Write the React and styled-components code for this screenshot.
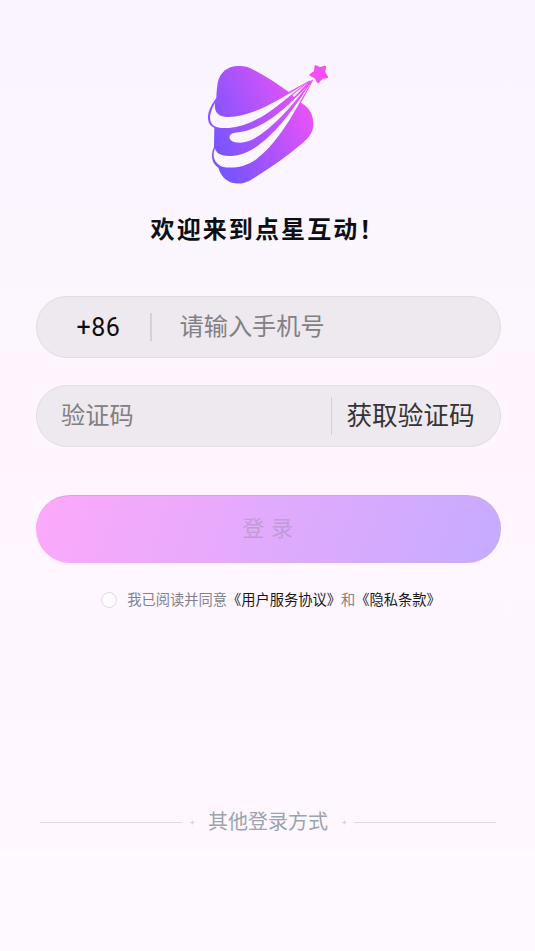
import styled, { createGlobalStyle } from "styled-components";

const App = () => {
  return (
    <>
      <GlobalStyle />
      <Page>
        <Logo />
        <Title>欢迎来到点星互动！</Title>
        <Form>
          <Field>
            <AreaCode>+86</AreaCode>
            <Separator $height={28} $width={2} />
            <Input $offset={28} type="tel" placeholder="请输入手机号" />
          </Field>
          <Field>
            <Input $offset={24.5} placeholder="验证码" />
            <Separator $height={38} $width={1} />
            <CodeButton type="button">获取验证码</CodeButton>
          </Field>
          <LoginButton type="button">登 录</LoginButton>
        </Form>
        <Agreement>
          <Radio />
          <p>
            我已阅读并同意<a>《用户服务协议》</a>和<a>《隐私条款》</a>
          </p>
        </Agreement>
        <OtherLogin>
          <Line />
          <Spark />
          <span>其他登录方式</span>
          <Spark />
          <Line />
        </OtherLogin>
      </Page>
    </>
  );
};

const Logo = () => (
  <LogoSvg viewBox="0 0 435 420">
    <defs>
      <linearGradient
        id="logo-fill"
        gradientUnits="userSpaceOnUse"
        x1="70"
        y1="290"
        x2="345"
        y2="160"
      >
        <stop offset="0" stopColor="#7855ff" />
        <stop offset="1" stopColor="#ea52f8" />
      </linearGradient>
    </defs>
    <path
      fill="url(#logo-fill)"
      d="M64 128 C65 108 66 96 68 84 C75 50 99 33 130 33 C150 33 160 36 175 44 C212 63 247 86 281 111 L341 78 L355 75 L318 143 C345 158 355 180 355 207 C355 231 344 246 322 265 C270 310 214 347 162 378 C140 389 112 388 96 376 C80 365 74 350 70 338 C50 325 46 301 57 276 L58 218 C40 212 36 191 41 172 C45 155 55 143 64 128 Z"
    />
    <path
      fill="#fbf5fe"
      d="M60 143 C57 169 67 185 98 186 C170 187 252 134 336 83 C276 122 202 211 101 219 C62 221 46 213 45 188 C46 169 53 157 60 143 Z"
    />
    <path
      fill="#fbf5fe"
      d="M120 233 C185 228 240 187 292 138 L335 96 C282 162 229 225 168 256 C149 264 134 264 121 262 C97 257 98 235 120 233 Z"
    />
    <path
      fill="#fbf5fe"
      d="M60 280 C63 296 80 304 107 303 C195 301 277 193 352 76 C308 150 260 256 182 314 C145 339 107 341 82 335 C58 326 50 302 60 280 Z"
    />
    <path fill="#fbf5fe" d="M292 121 L340 82 L300 124 L296 126 Z" />
    <path
      fill="#f34ff4"
      stroke="#f34ff4"
      strokeWidth="7"
      strokeLinejoin="round"
      d="M362 34 L374 40 L390 36 L387 51 L396 66 L381 68 L369 81 L362 67 L347 60 L360 50 Z"
    />
  </LogoSvg>
);

const Spark = () => (
  <SparkSvg viewBox="0 0 5 5">
    <path
      d="M2.5 0 L3.3 1.7 L5 2.5 L3.3 3.3 L2.5 5 L1.7 3.3 L0 2.5 L1.7 1.7 Z"
      fill="#d9d3de"
    />
  </SparkSvg>
);

export default App;

const GlobalStyle = createGlobalStyle`
  * {
    box-sizing: border-box;
  }

  body {
    margin: 0;
  }

  p {
    margin: 0;
  }

  body,
  input,
  button {
    font-family: Roboto, "Noto Sans CJK SC", sans-serif;
  }
`;

const Page = styled.main`
  width: 100%;
  height: 951px;
  display: flex;
  flex-direction: column;
  align-items: center;
  overflow: hidden;
  background: linear-gradient(
    #f9f4ff 0,
    #fcf6fe 351px,
    #fff5fe 353px,
    #fef7fe 849px,
    #fef9ff 852px
  );
`;

const LogoSvg = styled.svg`
  width: 145px;
  height: 140px;
  margin-top: 55px;
  flex-shrink: 0;
`;

const Title = styled.h1`
  margin: 17px 0 0 1px;
  font-size: 24px;
  line-height: 36px;
  font-weight: 700;
  letter-spacing: 2.1px;
  color: #0c0f14;
`;

const Form = styled.form`
  width: 465px;
  margin: 48px 0 0 1px;
  display: flex;
  flex-direction: column;
`;

const Field = styled.div`
  height: 62px;
  margin-bottom: 27px;
  display: flex;
  align-items: center;
  border: 1px solid #e1dbe3;
  border-radius: 31px;
  background-color: #eee8ef;
`;

const AreaCode = styled.span`
  width: 113px;
  padding-left: 40px;
  font-size: 25px;
  letter-spacing: 0.5px;
  color: #0c0c10;
`;

const Separator = styled.i`
  width: ${({ $width }) => $width}px;
  height: ${({ $height }) => $height}px;
  background-color: #d5d0d7;
`;

const Input = styled.input`
  flex: 1;
  min-width: 0;
  height: 100%;
  padding: 0 0 0 ${({ $offset }) => $offset}px;
  border: none;
  outline: none;
  background: transparent;
  font-size: 24.2px;

  &::placeholder {
    color: #828083;
  }
`;

const CodeButton = styled.button`
  width: 168px;
  padding: 0 0 6px 15px;
  border: none;
  background: transparent;
  font-size: 25.6px;
  text-align: left;
  white-space: nowrap;
  color: #353337;
`;

const LoginButton = styled.button`
  height: 68px;
  margin-top: 21px;
  padding-bottom: 8px;
  border: none;
  border-top: 1px solid #d5a2e0;
  border-radius: 34px;
  background: linear-gradient(110deg, #fda9fa 0%, #c5abff 100%);
  font-size: 22px;
  letter-spacing: 0.6px;
  color: #c29bd6;
`;

const Agreement = styled.div`
  margin-top: 26px;
  padding-left: 7px;
  display: flex;
  align-items: center;
  font-size: 14.25px;
  line-height: 22px;
  color: #85818a;

  a {
    color: #18161c;
  }
`;

const Radio = styled.span`
  width: 16px;
  height: 16px;
  margin-right: 10px;
  border: 1px solid #dcd7df;
  border-radius: 50%;
  background-color: #fffcff;
`;

const OtherLogin = styled.div`
  width: 456px;
  margin: 196px 0 0 1px;
  display: flex;
  align-items: center;
  justify-content: space-between;
  font-size: 20px;
  line-height: 30px;
  color: #9ba3af;

  span {
    margin: 0 6px;
  }
`;

const Line = styled.i`
  width: 142px;
  height: 1px;
  background-color: #e0d9e2;
`;

const SparkSvg = styled.svg`
  width: 5px;
  height: 5px;
`;
